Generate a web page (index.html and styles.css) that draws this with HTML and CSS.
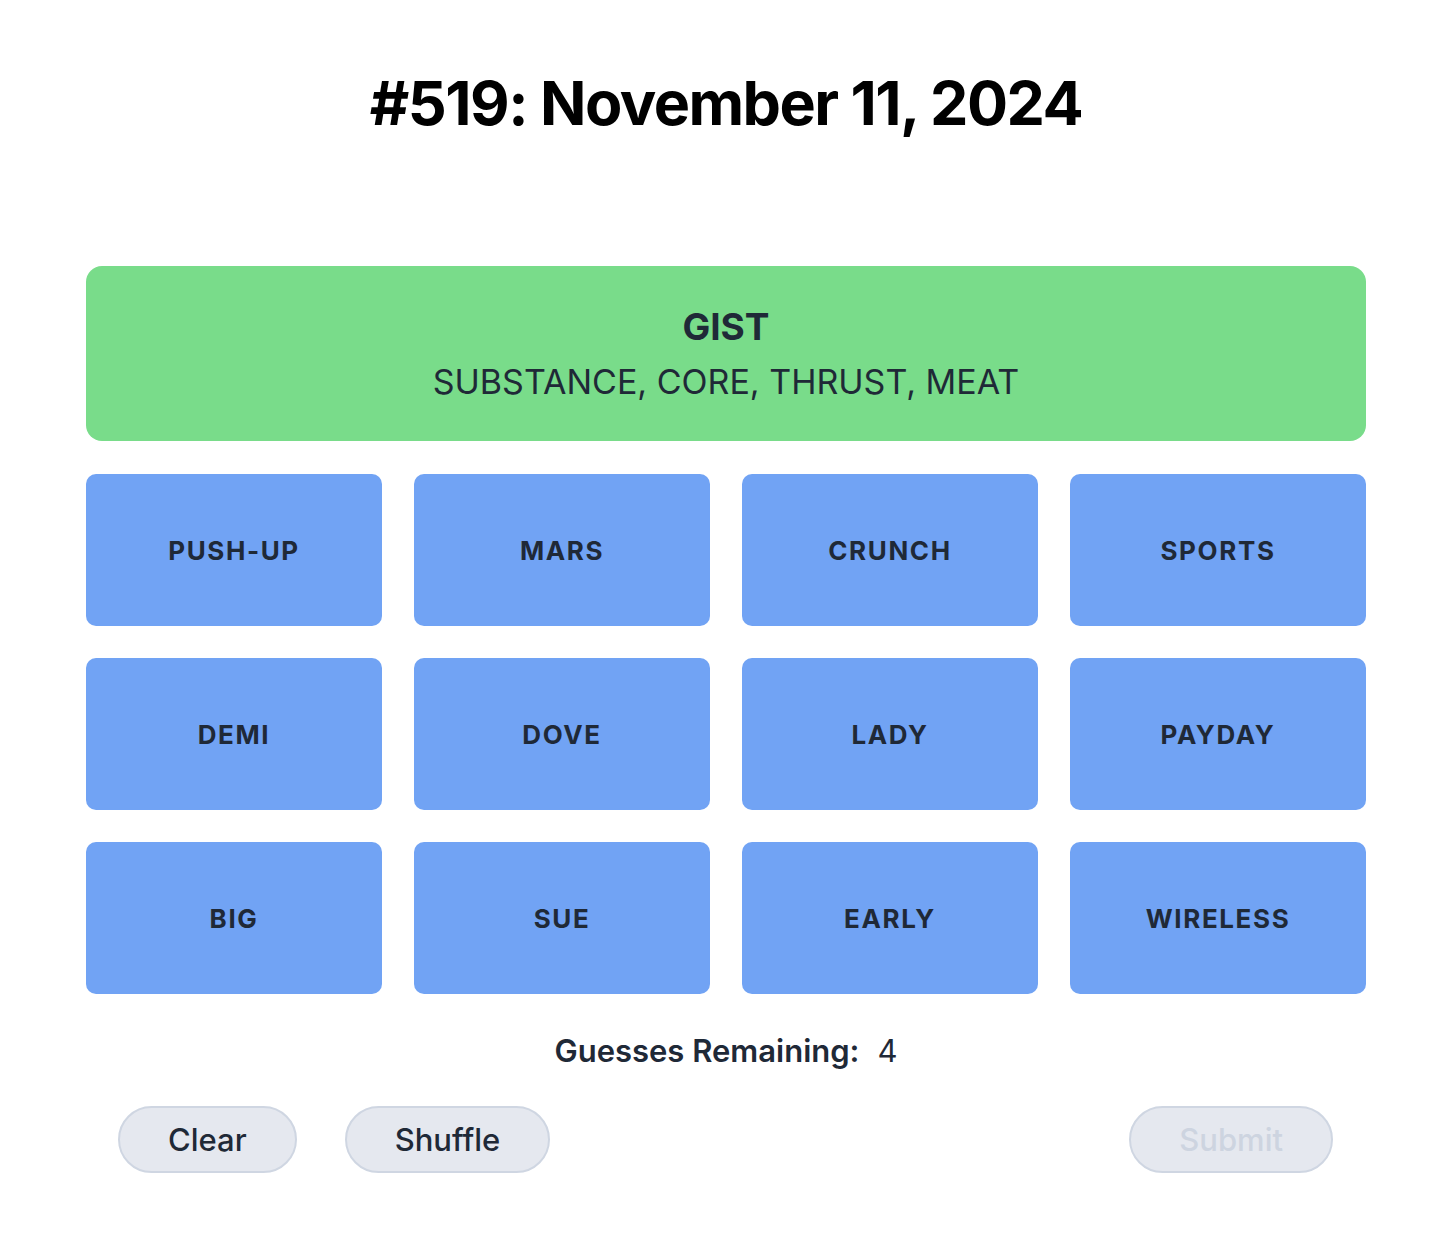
FILE: index.html
```html
<!DOCTYPE html>
<html lang="en">
<head>
<meta charset="utf-8">
<title>Connections #519</title>
<link rel="stylesheet" href="styles.css">
</head>
<body>
<main class="page">
  <h1 class="title">#519: November 11, 2024</h1>
  <section class="board">
    <div class="solved">
      <div class="solved-name">GIST</div>
      <div class="solved-words">SUBSTANCE, CORE, THRUST, MEAT</div>
    </div>
    <div class="grid">
      <div class="tile">PUSH-UP</div>
      <div class="tile">MARS</div>
      <div class="tile">CRUNCH</div>
      <div class="tile">SPORTS</div>
      <div class="tile">DEMI</div>
      <div class="tile">DOVE</div>
      <div class="tile">LADY</div>
      <div class="tile">PAYDAY</div>
      <div class="tile">BIG</div>
      <div class="tile">SUE</div>
      <div class="tile">EARLY</div>
      <div class="tile">WIRELESS</div>
    </div>
  </section>
  <p class="guesses"><span class="guesses-label">Guesses Remaining:</span><span class="guesses-count">4</span></p>
  <div class="controls">
    <div class="controls-left">
      <button class="btn">Clear</button>
      <button class="btn">Shuffle</button>
    </div>
    <button class="btn btn-disabled" disabled>Submit</button>
  </div>
</main>
</body>
</html>
```

FILE: styles.css
```css
* { box-sizing: border-box; }
html, body { margin: 0; padding: 0; background: #ffffff; }
body {
  font-family: Inter, "Noto Sans", "Liberation Sans", sans-serif;
  color: #1f2937;
  padding-left: 6px;
}
.page {
  width: 1280px;
  margin: 0 auto;
  padding-top: 73px;
}
.title {
  margin: 0;
  text-align: center;
  font-size: 61px;
  line-height: 60px;
  font-weight: 700;
  letter-spacing: -0.025em;
  color: #000000;
}
.board {
  margin-top: 133px;
  display: flex;
  flex-direction: column;
  gap: 33px;
}
.solved {
  height: 175px;
  border-radius: 16px;
  background: #79dc8a;
  display: flex;
  flex-direction: column;
  align-items: center;
  justify-content: center;
  gap: 11px;
  padding-top: 2px;
}
.solved-name {
  font-size: 37px;
  line-height: 44px;
  font-weight: 700;
}
.solved-words {
  font-size: 34px;
  line-height: 44px;
  font-weight: 400;
}
.grid {
  display: grid;
  grid-template-columns: repeat(4, 1fr);
  gap: 32px;
}
.tile {
  height: 152px;
  border-radius: 10px;
  background: #71a3f4;
  display: flex;
  align-items: center;
  justify-content: center;
  font-size: 26px;
  font-weight: 700;
  letter-spacing: 0.062em;
}
.guesses {
  margin: 37px 0 0;
  text-align: center;
  font-size: 31px;
  line-height: 40px;
}
.guesses-label { font-weight: 600; }
.guesses-count { margin-left: 18px; font-weight: 400; }
.controls {
  margin-top: 35px;
  padding: 0 33px 0 32px;
  display: flex;
  justify-content: space-between;
  align-items: center;
}
.controls-left {
  display: flex;
  gap: 48px;
}
.btn {
  height: 67px;
  padding: 0 48px;
  border-radius: 999px;
  border: 2px solid #cfd6e2;
  background: #e5e8ef;
  color: #1f2937;
  font-family: inherit;
  font-size: 31px;
  font-weight: 500;
}
.btn-disabled { color: #cdd4e0; }
```
